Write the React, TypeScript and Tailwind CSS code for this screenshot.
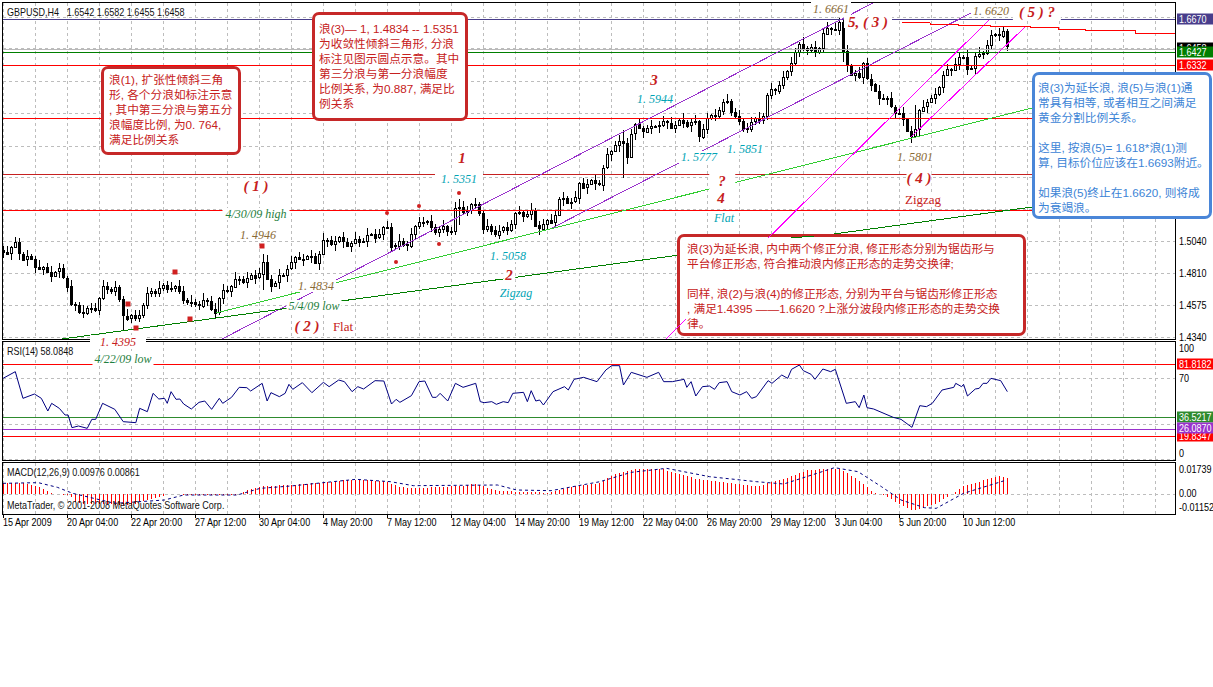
// GBPUSD H4 MetaTrader chart with wave-count notes
type Pt = number[]

const AXIS = "inline-block origin-left scale-x-[0.82] font-['Liberation_Sans',sans-serif] text-[11px] leading-[13px]"
const NOTE = "font-['Liberation_Sans','Noto_Sans_CJK_SC',sans-serif] text-[11.7px] leading-[15px]"

const priceKeys: Pt[] = [
  [3, 250], [15, 245], [22, 258], [30, 262], [45, 270], [60, 272], [67, 285], [71, 308], [85, 310], [95, 305], [103, 290], [115, 290],
  [122, 312], [135, 318], [150, 293], [158, 290], [172, 283], [183, 297], [192, 308], [203, 300], [215, 308], [222, 293], [240, 280], [255, 275],
  [263, 263], [268, 287], [283, 277], [288, 262], [303, 255], [315, 263], [323, 243], [337, 238], [352, 245], [367, 237], [387, 227], [392, 248],
  [407, 243], [415, 227], [420, 215], [432, 230], [450, 232], [455, 208], [478, 207], [483, 230], [500, 230], [507, 227], [514, 217], [532, 213],
  [535, 225], [552, 220], [559, 203], [575, 200], [577, 182], [600, 183], [605, 163], [614, 143], [623, 143], [625, 162], [632, 127], [650, 132],
  [657, 122], [695, 125], [698, 137], [705, 120], [727, 103], [741, 127], [764, 115], [768, 95], [782, 82], [791, 58], [800, 45], [816, 55],
  [823, 32], [839, 22], [843, 55], [850, 73], [859, 80], [864, 55], [868, 83], [877, 92], [891, 107], [900, 117], [911, 133], [916, 130],
  [920, 103], [932, 103], [941, 80], [955, 60], [966, 57], [968, 75], [977, 57], [989, 43], [993, 30], [1004, 33], [1007, 48],
]

const spikes: Record<number, number[]> = { 123: [300, 330], 263: [254, 290], 623: [130, 178], 459: [199, 225], 843: [20, 62], 915: [105, 138] }

function interp(keys: Pt[], x: number) {
  for (let i = 1; i < keys.length; i++) {
    if (x <= keys[i][0]) {
      const [x0, y0] = keys[i - 1]
      const [x1, y1] = keys[i]
      return y0 + ((y1 - y0) * (x - x0)) / (x1 - x0 || 1)
    }
  }
  return keys[keys.length - 1][1]
}

function makeBars() {
  const out: { x: number; open: number; close: number; high: number; low: number }[] = []
  let prev = 250
  for (let i = 0; i < 252; i++) {
    const x = 3 + 4 * i
    const close = interp(priceKeys, x) + 3.4 * Math.sin(i * 1.7) + 1.8 * Math.sin(i * 0.61 + 1)
    let high = Math.min(prev, close) - (1 + (Math.sin(i * 2.3) + 1) * 2.8)
    let low = Math.max(prev, close) + (1 + (Math.cos(i * 3.1) + 1) * 2.8)
    if (spikes[x]) {
      high = Math.min(high, spikes[x][0])
      low = Math.max(low, spikes[x][1])
    }
    out.push({ x, open: prev, close, high, low })
    prev = close
  }
  return out
}

const gridX = Array.from({ length: 37 }, (_, i) => 3 + 32 * i)

// straight chart objects, page coordinates
const trendLines: { d: number[]; c: string }[] = [
  { d: [222, 339, 873, 3], c: '#9932cc' },
  { d: [552, 228, 973, 12], c: '#9932cc' },
  { d: [216, 313, 1175, 72], c: '#32cd32' },
  { d: [62, 339, 1032, 207], c: '#007f00' },
  { d: [666, 339, 989, 20], c: '#ff00ff' },
  { d: [911, 137, 1025, 27], c: '#ff00ff' },
]
const redStep: Pt[] = [[902, 22], [930, 23], [930, 24], [958, 24], [958, 25], [990, 25], [990, 26], [1030, 26], [1030, 27], [1058, 27], [1058, 29], [1085, 29], [1085, 30], [1135, 30], [1135, 33], [1175, 33]]

const levels: { y: number; c: string }[] = [
  { y: 19.5, c: '#483d8b' },
  { y: 49.5, c: '#b9b9b9' },
  { y: 52.5, c: '#007f00' },
  { y: 65.5, c: '#ff0000' },
  { y: 118.5, c: '#ff0000' },
  { y: 174.5, c: '#c62020' },
  { y: 210.5, c: '#ff0000' },
]

const dots: Pt[] = [[387, 213], [419, 206], [459, 193], [439, 244], [396, 262]]
const squares: Pt[] = [[262, 246], [175, 272], [128, 304], [190, 319], [136, 328]]

const teal = 'italic text-[#00a3b4]'
const brown = 'italic text-[#8a6a35]'
const green = 'italic text-[#1f8040]'
const wave = 'italic font-bold text-[#c62020]'

const labels: { t: string; x: number; y: number; k: string; m?: string }[] = [
  { t: '1. 4946', x: 258, y: 235, k: brown },
  { t: '4/30/09 high', x: 256, y: 214, k: green, m: 'px-[3px]' },
  { t: '( 1 )', x: 256, y: 186, k: `${wave} text-[15px]` },
  { t: '1', x: 462, y: 158, k: `${wave} text-[15px]` },
  { t: '1. 5351', x: 459, y: 179, k: teal, m: 'px-[6px] py-[2px]' },
  { t: '1. 4834', x: 316, y: 286, k: brown },
  { t: '5/4/09 low', x: 314, y: 306, k: green },
  { t: '( 2 )', x: 307, y: 326, k: `${wave} text-[15px]` },
  { t: 'Flat', x: 343, y: 327, k: 'text-[#c62020] text-[13px]' },
  { t: '1. 4395', x: 118, y: 342, k: 'italic text-[#c62020]', m: 'px-[10px] py-[1px]' },
  { t: '4/22/09 low', x: 123, y: 359, k: green },
  { t: '1. 5058', x: 508, y: 256, k: teal },
  { t: '2', x: 509, y: 275, k: `${wave} text-[15px]` },
  { t: 'Zigzag', x: 516, y: 293, k: teal },
  { t: '3', x: 654, y: 80, k: `${wave} text-[15px]` },
  { t: '1. 5944', x: 655, y: 99, k: teal },
  { t: '1. 5777', x: 699, y: 157, k: teal },
  { t: '1. 5851', x: 745, y: 149, k: teal },
  { t: '?', x: 722, y: 181, k: `${wave} text-[15px]`, m: 'px-[9px] py-[5px]' },
  { t: '4', x: 721, y: 198, k: `${wave} text-[15px]` },
  { t: 'Flat', x: 724, y: 218, k: teal },
  { t: '1. 6661', x: 831, y: 9, k: brown, m: 'px-[2px] py-[2px]' },
  { t: '5, ( 3 )', x: 868, y: 22, k: `${wave} text-[15px]`, m: 'px-[4px]' },
  { t: '1. 6620', x: 991, y: 11, k: brown },
  { t: '( 5 ) ?', x: 1037, y: 12, k: `${wave} text-[15px]`, m: 'px-[6px] py-[3px]' },
  { t: '1. 5801', x: 915, y: 157, k: brown },
  { t: '( 4 )', x: 919, y: 178, k: `${wave} text-[15px]`, m: 'py-[2px]' },
  { t: 'Zigzag', x: 923, y: 200, k: 'text-[#c62020] text-[13px]' },
]

const axisText: { t: string; y: number }[] = [
  { t: '1.5040', y: 241 }, { t: '1.4810', y: 273 }, { t: '1.4575', y: 305 }, { t: '1.4340', y: 337 },
  { t: '100', y: 348 }, { t: '70', y: 378 }, { t: '0', y: 453 },
  { t: '0.01739', y: 469 }, { t: '0.00', y: 493 }, { t: '-0.01152', y: 507 },
]

const tags: { t: string; y: number; c: string }[] = [
  { t: '1.6670', y: 19, c: 'bg-[#483d8b]' },
  { t: '1.6458', y: 48, c: 'bg-black' },
  { t: '1.6427', y: 52, c: 'bg-[#007f00]' },
  { t: '1.6332', y: 65, c: 'bg-[#ff0000]' },
  { t: '81.8182', y: 364, c: 'bg-[#ff0000]' },
  { t: '36.5217', y: 417, c: 'bg-[#2e8b2e]' },
  { t: '19.8347', y: 436, c: 'bg-[#ff0000]' },
  { t: '26.0870', y: 428, c: 'bg-[#9932cc]' },
]

const timeLabels = [
  '15 Apr 2009', '20 Apr 04:00', '22 Apr 20:00', '27 Apr 12:00', '30 Apr 04:00', '4 May 20:00', '7 May 12:00', '12 May 04:00',
  '14 May 20:00', '19 May 12:00', '22 May 04:00', '26 May 20:00', '29 May 12:00', '3 Jun 04:00', '5 Jun 20:00', '10 Jun 12:00',
]

// traced from the two halves of the indicator panes
const fromLeft = (p: Pt[]) => p.map(([x, y]) => [x / 2.613, 340 + y / 3])
const fromRight = (p: Pt[]) => p.map(([x, y]) => [600 + x / 2.558, 340 + y / 3])

const rsiPts = [
  ...fromLeft([[8, 115], [40, 95], [60, 175], [90, 162], [108, 175], [125, 213], [135, 190], [155, 205], [170, 225], [178, 225], [188, 263], [205, 258], [228, 265], [240, 238], [250, 238], [268, 190], [300, 208], [322, 245], [355, 248], [365, 205], [385, 215], [400, 160], [415, 177], [430, 175], [437, 190], [447, 155], [460, 178], [470, 177], [480, 192], [500, 207], [520, 187], [535, 183], [553, 208], [573, 175], [582, 190], [605, 172], [625, 142], [645, 143], [655, 153], [685, 130], [698, 183], [708, 158], [730, 170], [745, 160], [755, 133], [765, 148], [790, 128], [815, 158], [845, 127], [860, 140], [885, 120], [900, 125], [920, 155], [935, 140], [950, 147], [980, 122], [1003, 123], [1023, 192], [1035, 178], [1045, 187], [1075, 167], [1095, 125], [1110, 123], [1130, 172], [1140, 172], [1150, 160], [1170, 183], [1190, 130], [1210, 142], [1243, 130], [1255, 185], [1265, 188], [1285, 185], [1297, 193], [1315, 185], [1328, 188], [1340, 160], [1368, 157], [1378, 185], [1388, 152], [1400, 183], [1410, 180], [1420, 195], [1445, 155], [1475, 140], [1485, 150], [1500, 118], [1525, 112], [1560, 125]]),
  ...fromRight([[15, 90], [30, 77], [50, 77], [60, 135], [80, 97], [120, 112], [150, 97], [163, 125], [185, 125], [215, 118], [222, 142], [233, 125], [245, 168], [262, 140], [280, 138], [293, 148], [305, 128], [325, 125], [337, 155], [358, 165], [375, 155], [388, 175], [400, 170], [430, 122], [440, 130], [465, 105], [480, 115], [490, 88], [510, 75], [520, 92], [540, 103], [550, 118], [570, 87], [590, 95], [602, 88], [630, 190], [653, 185], [663, 203], [675, 165], [683, 203], [700, 207], [750, 232], [770, 238], [798, 262], [818, 197], [835, 200], [850, 190], [875, 150], [905, 142], [910, 130], [925, 140], [930, 133], [940, 168], [960, 147], [970, 145], [980, 130], [990, 130], [1000, 115], [1025, 122], [1042, 155]]),
]

const histKeys = [
  ...fromLeft([[8, 430], [60, 428], [100, 440], [140, 462], [180, 465], [200, 490], [340, 495], [400, 475], [440, 462], [500, 465], [620, 465], [650, 448], [690, 438], [760, 435], [840, 428], [900, 420], [1000, 422], [1040, 440], [1070, 445], [1200, 438], [1240, 432], [1300, 452], [1350, 455], [1430, 458], [1500, 438]]),
  ...fromRight([[0, 430], [30, 405], [90, 388], [160, 388], [250, 418], [400, 440], [500, 405], [530, 390], [610, 385], [660, 420], [700, 458], [720, 463], [800, 513], [860, 490], [900, 462], [930, 438], [1020, 408], [1042, 415]]),
]

const signalPts = [
  ...fromLeft([[8, 430], [100, 428], [150, 442], [190, 460], [300, 490], [430, 480], [480, 465], [620, 465], [680, 445], [760, 438], [930, 418], [1020, 425], [1080, 437], [1300, 435], [1350, 450], [1440, 452]]),
  ...fromRight([[0, 425], [80, 397], [170, 385], [280, 410], [400, 425], [470, 432], [600, 383], [660, 395], [720, 440], [770, 480], [830, 503], [860, 505], [930, 460], [1040, 420]]),
]

const poly = (p: Pt[]) => p.map((q) => q.join(',')).join(' ')

function Grid({ top, bottom, rows }: { top: number; bottom: number; rows: number[] }) {
  return (
    <g stroke="#bdbdbd" strokeWidth={1} strokeDasharray="3 3" shapeRendering="crispEdges">
      {gridX.map((x) => <line key={x} x1={x + 0.5} x2={x + 0.5} y1={top} y2={bottom} />)}
      {rows.map((y) => <line key={y} x1={3} x2={1175} y1={y + 0.5} y2={y + 0.5} />)}
    </g>
  )
}

function MainChart() {
  return (
    <svg width={1172} height={336} viewBox="3 3 1172 336" className="block">
      <Grid top={3} bottom={339} rows={[17, 48, 81, 113, 146, 177, 209, 241, 273, 305, 337]} />
      <g shapeRendering="crispEdges">
        {makeBars().map((b) => {
          const up = b.close < b.open
          const top = Math.round(Math.min(b.open, b.close))
          const h = Math.max(1, Math.round(Math.abs(b.open - b.close)))
          return (
            <g key={b.x}>
              <line x1={b.x + 0.5} x2={b.x + 0.5} y1={Math.round(b.high)} y2={Math.round(b.low)} stroke="#000" />
              <rect x={b.x - 0.5} y={top + 0.5} width={2} height={h} fill={up ? '#fff' : '#000'} stroke="#000" />
            </g>
          )
        })}
      </g>
      {levels.map((l) => <line key={l.y} x1={3} x2={1175} y1={l.y} y2={l.y} stroke={l.c} shapeRendering="crispEdges" />)}
      <g shapeRendering="crispEdges">
        {trendLines.map((l, i) => (
          <line key={i} x1={l.d[0]} y1={l.d[1]} x2={l.d[2]} y2={l.d[3]} stroke={l.c} />
        ))}
      </g>
      <polyline points={poly(redStep)} fill="none" stroke="#ff0000" shapeRendering="crispEdges" />
      {dots.map(([x, y]) => <circle key={x} cx={x} cy={y} r={2} fill="#d02020" />)}
      {squares.map(([x, y]) => <rect key={x} x={x - 2.5} y={y - 2.5} width={5} height={5} fill="#d02020" />)}
    </svg>
  )
}

function RsiChart() {
  return (
    <svg width={1172} height={118} viewBox="3 342 1172 118" className="block">
      <Grid top={342} bottom={460} rows={[378, 424, 459]} />
      <g shapeRendering="crispEdges">
        <line x1={3} x2={1175} y1={364.5} y2={364.5} stroke="#ff0000" />
        <line x1={3} x2={1175} y1={417.5} y2={417.5} stroke="#2e8b2e" />
        <line x1={3} x2={1175} y1={429.5} y2={429.5} stroke="#9932cc" />
        <line x1={3} x2={1175} y1={436.5} y2={436.5} stroke="#ff0000" />
      </g>
      <polyline points={poly(rsiPts)} fill="none" stroke="#000080" strokeWidth={1} />
    </svg>
  )
}

function MacdChart() {
  const bars = Array.from({ length: 252 }, (_, i) => 3 + 4 * i)
  return (
    <svg width={1172} height={51} viewBox="3 463 1172 51" className="block">
      <Grid top={463} bottom={514} rows={[494]} />
      <g stroke="#ff0000" shapeRendering="crispEdges">
        {bars.map((x) => (
          <line key={x} x1={x + 0.5} x2={x + 0.5} y1={494} y2={Math.round(interp(histKeys, x))} />
        ))}
      </g>
      <polyline points={poly(signalPts)} fill="none" stroke="#000080" strokeDasharray="3 3" />
    </svg>
  )
}

function Pane({ children, caption, className }: { children: React.ReactNode; caption?: string[]; className: string }) {
  return (
    <div className={`relative w-[1174px] border border-black bg-white overflow-hidden ${className}`}>
      {children}
      {caption?.map((c, i) => (
        <span key={c} className={`absolute left-[4px] whitespace-pre text-[#111] ${AXIS} ${i === 0 ? 'top-[3px]' : 'top-[36px]'}`}>{c}</span>
      ))}
    </div>
  )
}

function Note({ lines, className, text }: { lines: string[]; className: string; text: string }) {
  return (
    <div className={`absolute bg-white border-[3px] rounded-[7px] ${className}`}>
      {lines.map((l, i) => (
        <div key={i} className={`h-[15px] whitespace-pre ${NOTE} ${text}`}>{l}</div>
      ))}
    </div>
  )
}

export default function App() {
  return (
    <div className="relative w-[1213px] h-[687px] overflow-hidden bg-white pl-[2px] pt-[2px]">
      <div className="flex flex-col gap-[1px]">
        <Pane className="h-[338px]" caption={['GBPUSD,H4   1.6542 1.6582 1.6455 1.6458']}><MainChart /></Pane>
        <Pane className="h-[120px]" caption={['RSI(14) 58.0848']}><RsiChart /></Pane>
        <Pane className="h-[53px]" caption={['MACD(12,26,9) 0.00976 0.00861', 'MetaTrader, © 2001-2008 MetaQuotes Software Corp.']}><MacdChart /></Pane>
      </div>
      <div className="grid grid-cols-[repeat(16,64px)] pl-[1px]">
        {timeLabels.map((t) => (
          <div key={t} className="flex flex-col">
            <div className="h-[3px] w-px bg-black" />
            <span className={`-mt-[2px] whitespace-nowrap text-black ${AXIS}`}>{t}</span>
          </div>
        ))}
      </div>

      {axisText.map((a) => (
        <span key={a.t} className={`absolute left-[1179px] -translate-y-1/2 whitespace-nowrap text-black ${AXIS}`} style={{ top: a.y }}>{a.t}</span>
      ))}
      {tags.map((a) => (
        <div key={a.t} className={`absolute left-[1177px] flex w-[36px] h-[11px] items-center overflow-hidden -translate-y-1/2 pl-[2px] text-white ${a.c}`} style={{ top: a.y }}>
          <span className={`whitespace-nowrap ${AXIS}`}>{a.t}</span>
        </div>
      ))}

      {labels.map((l, i) => (
        <span
          key={i}
          className={`absolute -translate-x-1/2 -translate-y-1/2 whitespace-pre bg-white font-['Liberation_Serif',serif] text-[12px] leading-[12px] ${l.k} ${l.m ?? 'px-[2px]'}`}
          style={{ left: l.x, top: l.y }}
        >
          {l.t}
        </span>
      ))}

      <Note
        className="left-[101px] top-[66px] w-[140px] h-[89px] border-[#c62828] pl-[5px] pt-[3px]"
        text="text-[#c62020]"
        lines={['浪(1), 扩张性倾斜三角', '形, 各个分浪如标注示意', ', 其中第三分浪与第五分', '浪幅度比例, 为0. 764,', '满足比例关系']}
      />
      <Note
        className="left-[312px] top-[12px] w-[156px] h-[109px] border-[#c62828] pl-[4px] pt-[6px]"
        text="text-[#c62020]"
        lines={['浪(3)— 1, 1.4834 -- 1.5351', '为收敛性倾斜三角形, 分浪', '标注见图示圆点示意。其中', '第三分浪与第一分浪幅度', '比例关系, 为0.887, 满足比', '例关系']}
      />
      <Note
        className="left-[677px] top-[234px] w-[349px] h-[102px] border-[#c62828] pl-[7px] pt-[4px]"
        text="text-[#c62020]"
        lines={['浪(3)为延长浪, 内中两个修正分浪, 修正形态分别为锯齿形与', '平台修正形态, 符合推动浪内修正形态的走势交换律;', '', '同样, 浪(2)与浪(4)的修正形态, 分别为平台与锯齿形修正形态', ', 满足1.4395 ——1.6620 ?上涨分波段内修正形态的走势交换', '律。']}
      />
      <Note
        className="left-[1032px] top-[72px] w-[180px] h-[147px] border-[#4a86d8] pl-[3px] pt-[5px]"
        text="text-[#3c84d6]"
        lines={['浪(3)为延长浪, 浪(5)与浪(1)通', '常具有相等, 或者相互之间满足', '黄金分割比例关系。', '', '这里, 按浪(5)= 1.618*浪(1)测', '算, 目标价位应该在1.6693附近。', '', '如果浪(5)终止在1.6620, 则将成', '为衰竭浪。']}
      />

      {/* bits of the trend lines that sit in front of the red note */}
      <svg width={1213} height={687} className="absolute left-0 top-0 pointer-events-none">
        <g shapeRendering="crispEdges">
          <line x1={666} y1={339} x2={686} y2={319} stroke="#ff00ff" />
          <line x1={768} y1={238} x2={772} y2={234} stroke="#ff00ff" />
          <line x1={791} y1={238} x2={814} y2={236} stroke="#007f00" />
        </g>
      </svg>
    </div>
  )
}
